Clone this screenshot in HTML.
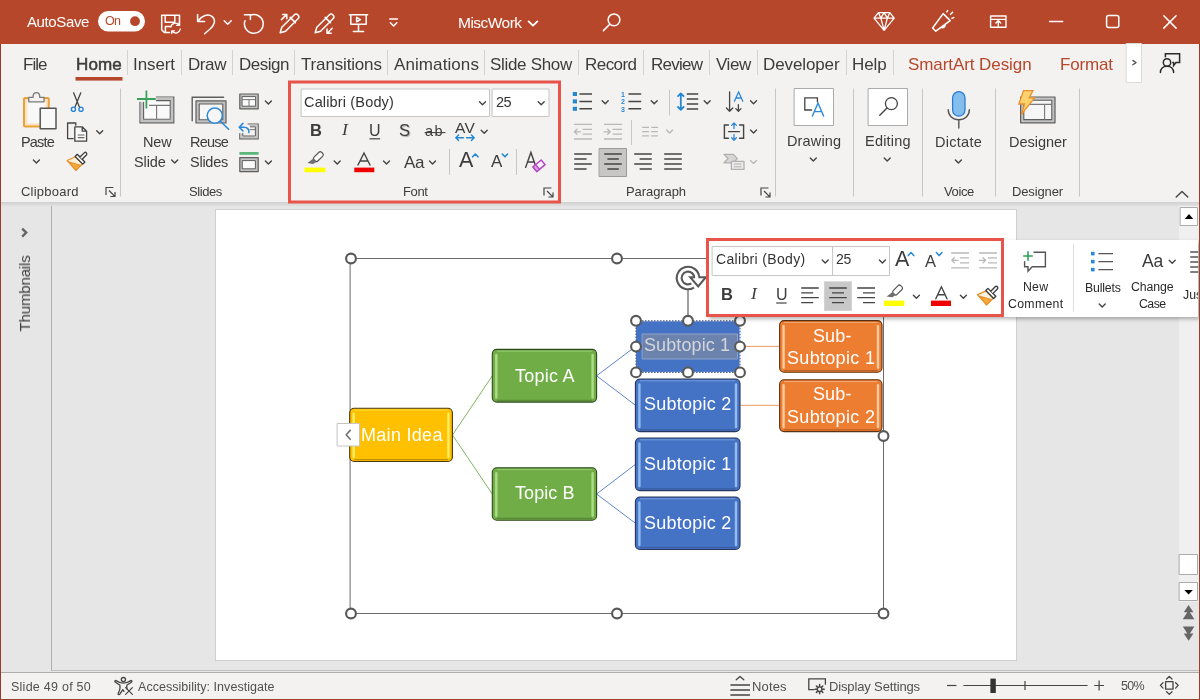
<!DOCTYPE html>
<html lang="en">
<head>
<meta charset="utf-8">
<title>MiscWork - PowerPoint</title>
<style>
*{box-sizing:border-box;margin:0;padding:0}
html,body{width:1200px;height:700px;overflow:hidden;background:#e6e6e6}
body{position:relative;font-family:"Liberation Sans",sans-serif;color:#444}
.abs{position:absolute}
.t{position:absolute;white-space:nowrap;line-height:1;font-family:"Liberation Sans",sans-serif;will-change:transform}
svg{position:absolute;left:0;top:0;overflow:visible}
#titlebar{left:0;top:0;width:1200px;height:44px;background:#b7472a}
#tabs{left:0;top:44px;width:1200px;height:40px;background:#f3f2f1}
#ribbon{left:0;top:84px;width:1200px;height:118px;background:#f3f2f1}
#ribshadow{left:0;top:202px;width:1200px;height:5px;background:linear-gradient(#cfcfcf,#e6e6e6)}
#work{left:0;top:206px;width:1200px;height:466px;background:#e6e6e6}
#thumbs{left:0;top:206px;width:52px;height:465px;background:transparent;background:#e6e6e6;border-right:1px solid #b0b0b0}
#slide{left:216px;top:210px;width:800px;height:450px;background:#fff;box-shadow:0 0 0 1px #d0d0d0}
#vscroll{left:1179px;top:206px;width:19.500px;height:396px;background:#f0f0f0}
#status{left:0;top:673px;width:1200px;height:27px;background:#f3f2f1}
#paneline{left:52px;top:670px;width:1147px;height:1px;background:#c0c0c0}
#statline{left:0;top:672px;width:1200px;height:1px;background:#adadad}
#bl{left:0;top:44px;width:1.300px;height:656px;background:#9c3a22}
#br{left:1198.500px;top:44px;width:1.500px;height:656px;background:#a23c23}
#bb{left:0;top:698.500px;width:1200px;height:1.500px;background:#a23c23}
#mini{left:707px;top:240px;width:491px;height:77px;background:#fff;box-shadow:2px 2px 4px rgba(0,0,0,.3)}
.box{position:absolute;background:#fff;border:1px solid #c6c6c6}
.sel{position:absolute;background:#c8c8c8}
</style>
</head>
<body>
<div class="abs" id="titlebar"></div>
<div class="abs" id="tabs"></div>
<div class="abs" id="ribbon"></div>
<div class="abs" id="work"></div>
<div class="abs" id="ribshadow"></div>
<div class="abs" id="thumbs"></div>
<div class="abs" id="vscroll"></div>
<div class="abs" id="slide"></div>
<div class="abs" id="status"></div>
<div class="abs" id="paneline"></div>
<div class="abs" id="statline"></div>
<svg width="1200" height="84" viewBox="0 0 1200 84" fill="none" stroke="#fff" stroke-width="1.5" stroke-linecap="round" stroke-linejoin="round">
<!-- autosave toggle -->
<rect x="98" y="11" width="47" height="20.5" rx="10.2" fill="#fff" stroke="none"/>
<circle cx="135" cy="21.2" r="4.9" fill="#b7472a" stroke="none"/>
<!-- save w/ sync -->
<path d="M161.7 15.2h17.8v10M161.7 15.2v14.6l2.6 2.8h5.2M165.2 15.4v6.8h9.6v-6.8M165.4 32.4v-5.8h4.6"/>
<path d="M170.8 27.2a4.6 4.6 0 0 1 8.2-2.2M179.3 22.6v2.8h-2.8M180.2 29a4.6 4.6 0 0 1-8.2 2.2M171.700 33.600v-2.800h2.800" stroke-width="1.3"/>
<!-- undo -->
<path d="M197.600 14.400v7h7M197.800 21.200c4-5.600 10.400-8 14.400-4.600c4.400 3.800 1.800 9-2.400 12.600l-5.200 4.600"/>
<path d="M224.200 20.800l3.500 3.400l3.500-3.400" stroke-width="1.5"/>
<!-- redo -->
<path d="M250.300 15.200a9.400 9.400 0 1 1-5.300 5.500M244.400 14.800h6v4.600"/>
<!-- pen 1 -->
<path d="M280.200 32.800l1.600-5.600l12.400-12.200a2.600 2.600 0 0 1 3.800 3.800l-12.400 12.400zM290.200 17.400l5.200 5.200M281.400 19.600l5.200-5M282.600 14.600h4.200v4.200"/>
<!-- pen 2 -->
<path d="M315.200 32.800l1.600-5.600l12.400-12.200a2.600 2.600 0 0 1 3.800 3.800l-12.400 12.400zM325.200 17.400l5.200 5.200M332.200 28.200l-5 5M327 29v4.200h4.200"/>
<!-- present -->
<path d="M349.400 14.800h18.200M350.800 15v9.200h15.400v-9.200M358.500 24.400v6.800M353.400 31.400h10.200M356.600 17.400v4.400l3.800-2.200z"/>
<!-- qat -->
<path d="M389.800 19h7.600M390.400 22.800l3.200 3.200l3.200-3.200"/>
<!-- filename chevron -->
<path d="M528.600 21.400l4.400 4.200l4.400-4.200" stroke-width="1.9"/>
<!-- search -->
<circle cx="614" cy="19.800" r="5.900"/><path d="M609.800 24.200l-6.400 6.400"/>
<!-- diamond -->
<path d="M878.400 12.600h11.400l4.400 5.600l-10.100 12.200l-10.100-12.200zM874.200 18.200h20M878.400 12.600l2.400 5.600l3.300 12M889.800 12.600l-2.400 5.600l-3.300 12M880.800 18.200l3.300-5.600l3.300 5.600" stroke-width="1.3"/>
<!-- megaphone -->
<path d="M932.600 28l10.600-14.400l7 7l-14.400 10.600zM941 27.200a2.600 2.600 0 0 0 4-3M946.800 11.800l.8-1.200M950.600 14.200l2-2M952 18.200l1.800-.6" stroke-width="1.500"/>
<!-- ribbon display -->
<path d="M990.600 16h15.400v11.200h-15.400zM990.600 19.400h15.400M998.300 26v-5M995.900 23l2.400-2.400l2.400 2.400" stroke-width="1.4"/>
<!-- window controls -->
<path d="M1049.600 21.400h13"/>
<rect x="1106.600" y="15.600" width="12.200" height="12" rx="2"/>
<path d="M1163.800 15.800l12.300 12.300M1176.100 15.800l-12.300 12.300"/>
</svg>

<svg width="1200" height="700" viewBox="0 0 1200 700" fill="none" stroke-linecap="round" stroke-linejoin="round">
<!-- tab separators -->
<path d="M127.500 50v25M181.500 50v25M232.500 50v25M294.500 50v25M387.500 50v25M484.500 50v25M578.500 50v25M643.500 50v25M709.500 50v25M757.500 50v25M846.500 50v25M893.500 50v25" stroke="#d4d2d0" stroke-width="1" stroke-linecap="butt"/>
<rect x="75.500" y="77" width="47" height="3.600" fill="#b7472a"/>
<!-- scroll right button -->
<rect x="1126.500" y="43.500" width="15" height="39" fill="#fff" stroke="#dddbd9" stroke-width="1"/>
<path d="M1132.800 60.400l3.200 2.200l-3.200 2.200" stroke="#555" stroke-width="1.300"/>
<!-- comments icon -->
<g stroke="#2b2b2b" stroke-width="1.500">
<circle cx="1167" cy="62.500" r="3.700"/>
<path d="M1160.400 72.600c0-4.200 3-6.400 6.600-6.400s6.600 2.200 6.600 6.400"/>
<path d="M1165.400 56.800v-3h14.200v8.800h-3.600l-2.400 3v-3h-.8" stroke-linejoin="miter"/>
</g>
</svg>

<svg width="1200" height="700" viewBox="0 0 1200 700" fill="none" stroke-linecap="round" stroke-linejoin="round">
<defs>
<path id="chev" d="M-3 -1.500l3 3l3-3" fill="none" stroke-width="1.400"/>
<path id="launch" d="M0 7.400v-7.400h7.400M3 3l5.800 5.800M9 4.400v4.600h-4.600" fill="none" stroke="#444" stroke-width="1.200" stroke-linecap="butt" stroke-linejoin="miter"/>
<g id="brush" stroke-linejoin="round">
<path d="M-5 1.500L-8.200 10L4.950 10.750L5 1.500z" fill="#fdf1dc" stroke="#e8912d" stroke-width="1.300"/>
<path d="M-5.660 9.600L4.670 3.800L4.950 10.750z" fill="#f5a83c" stroke="#e8912d" stroke-width="1"/>
<rect x="-5.400" y="-1.500" width="10.800" height="3" fill="#fafafa" stroke="#3b3b3b" stroke-width="1.300"/>
<path d="M-1.500 -1.500v-6a1.500 1.500 0 0 1 3 0v6" fill="#fafafa" stroke="#3b3b3b" stroke-width="1.300"/>
</g>
</defs>
<!-- group separators -->
<path d="M120.500 88.500v108M775.500 88.500v108M853.500 88.500v108M922.500 88.500v108M995.500 88.500v108M1079.500 88.500v108" stroke="#c8c6c4" stroke-width="1" stroke-linecap="butt"/>
<path d="M669.500 89.500v26M631.500 120v25M449.500 149v26M516.500 149v26" stroke="#c8c6c4" stroke-width="1" stroke-linecap="butt"/>

<!-- ===== Clipboard ===== -->
<!-- paste -->
<rect x="24" y="98" width="24.800" height="28.600" rx="1" fill="#fbe3bd" stroke="#e9a23b" stroke-width="2"/>
<rect x="27.400" y="101.400" width="18" height="22" fill="#f8f8f8" stroke="none"/>
<path d="M28.800 101.800v-4.400h4.200c0-2.800 1.400-4.800 3.400-4.800s3.400 2 3.400 4.800h4.200v4.400z" fill="#f3f2f1" stroke="#7a7a7a" stroke-width="1.300"/>
<rect x="40.200" y="108.200" width="15.800" height="20.600" fill="#f8f8f8" stroke="#555" stroke-width="1.500"/>
<use href="#chev" x="36.400" y="161.600" stroke="#444"/>
<!-- cut -->
<g stroke="#444" stroke-width="1.300"><path d="M73.600 92.800l5.800 14.200M80.800 92.800l-5.800 14.200"/></g>
<g stroke="#2b88d8" stroke-width="1.400" fill="#f3f2f1"><circle cx="73.400" cy="109.300" r="2.100"/><circle cx="81" cy="109.300" r="2.100"/></g>
<!-- copy -->
<g stroke="#444" stroke-width="1.300">
<path d="M73.200 138.600h-5.600v-15.600h8.200v2.200"/>
<path d="M74.800 126.800h7.400l4.400 4.400v10h-11.800zM82.200 126.800v4.400h4.400" fill="#f8f8f8"/>
<path d="M78.200 135h5.800M78.200 137.600h5.800" stroke="#666" stroke-width="1.100"/>
</g>
<use href="#chev" x="99.700" y="132.300" stroke="#444"/>
<!-- format painter -->
<use href="#brush" transform="translate(80 159.200) rotate(45)"/>
<use href="#launch" x="106" y="187.500"/>

<!-- ===== Slides ===== -->
<!-- new slide -->
<path d="M156.400 97h17.400v25.800h-33.800v-20.600" stroke="#5e5e5e" stroke-width="1.200" stroke-linejoin="miter"/>
<path d="M156.400 98.800h15.600v22.200h-30.200v-18.800" stroke="#c2c2c2" stroke-width="2.200" stroke-linejoin="miter" stroke-linecap="butt"/>
<path d="M156.400 100.600h13.800v18.600h-26.600v-17" fill="#fafafa" stroke="#5e5e5e" stroke-width="1.100" stroke-linejoin="miter"/>
<path d="M149 105.400h21M156.600 105.400v13.600" stroke="#777" stroke-width="1.100" stroke-linecap="butt"/>
<path d="M137 99h18.800M146.400 90.400v18.200" stroke="#3aa35b" stroke-width="1.800" stroke-linecap="butt"/>
<use href="#chev" x="174.700" y="161.600" stroke="#444"/>
<!-- reuse slides -->
<path d="M192.200 120.800v-23.600h31.400" stroke="#5e5e5e" stroke-width="1.400" stroke-linejoin="miter"/>
<rect x="196" y="100.800" width="30" height="22.200" fill="#c2c2c2" stroke="#5e5e5e" stroke-width="1.200"/>
<rect x="199.200" y="104" width="23.600" height="15.800" fill="#f6f6f6" stroke="#5e5e5e" stroke-width="1.100"/>
<circle cx="214.800" cy="115.600" r="7.600" fill="#f6f6f6" stroke="#2b88d8" stroke-width="1.500"/>
<path d="M220.400 121.200l8.200 8" stroke="#2b88d8" stroke-width="1.600"/>
<!-- layout -->
<rect x="239.800" y="94" width="18.400" height="14.800" fill="#c2c2c2" stroke="#5e5e5e" stroke-width="1.200"/>
<rect x="242.400" y="96.600" width="13.200" height="9.600" fill="#fafafa" stroke="#5e5e5e" stroke-width="1"/>
<path d="M242.400 99.600h13.200M249 99.600v6.600" stroke="#777" stroke-width="1"/>
<use href="#chev" x="268.400" y="102.600" stroke="#444"/>
<!-- reset -->
<path d="M248 124h10.200v14.800h-18.400v-5.200" fill="none" stroke="#5e5e5e" stroke-width="1.200" stroke-linejoin="miter"/>
<path d="M249.600 125.400h7.200v12h-15.600v-4" stroke="#c2c2c2" stroke-width="1.800" stroke-linejoin="miter" stroke-linecap="butt"/>
<path d="M250.400 126.800h5v9.200h-12.600v-2.600" fill="none" stroke="#5e5e5e" stroke-width="1" stroke-linejoin="miter"/>
<path d="M250 129.600h5" stroke="#777" stroke-width="1"/>
<path d="M239.600 127.200h4.400c3.400 0 5 2.200 5 5.400M243 123.400l-3.800 3.800l3.800 3.800" stroke="#2b88d8" stroke-width="1.600"/>
<!-- section -->
<rect x="239.400" y="152" width="19.200" height="2.800" fill="#5cb87a"/>
<rect x="239.800" y="157.600" width="18.400" height="14" fill="#c2c2c2" stroke="#5e5e5e" stroke-width="1.200"/>
<rect x="242.600" y="160.600" width="12.800" height="8.200" fill="#fafafa" stroke="#5e5e5e" stroke-width="1"/>
<use href="#chev" x="268.400" y="162.600" stroke="#444"/>

<!-- ===== Font ===== -->
<rect x="301.500" y="89" width="188" height="27.500" fill="#fff" stroke="#c6c6c6"/>
<rect x="492.500" y="89" width="56.500" height="27.500" fill="#fff" stroke="#c6c6c6"/>
<use href="#chev" x="482.500" y="103.200" stroke="#444"/>
<use href="#chev" x="541.200" y="103.200" stroke="#444"/>
<!-- U underline / ab strike -->
<path d="M369.500 138.800h10.600" stroke="#444" stroke-width="1.200" stroke-linecap="butt"/>
<path d="M424.600 132.600h20.800" stroke="#444" stroke-width="1.100" stroke-linecap="butt"/>
<!-- AV arrow -->
<path d="M455.800 137.800h7.600M466.600 137.800h7.600M458.600 135l-2.800 2.800l2.800 2.800M471.400 135l2.800 2.800l-2.800 2.800" stroke="#2488d0" stroke-width="1.400"/>
<use href="#chev" x="484.200" y="131.800" stroke="#444"/>
<!-- highlighter -->
<rect x="304.500" y="167.600" width="21" height="4.600" fill="#ffff00"/>
<g transform="translate(317.600 157.400) rotate(45)"><rect x="-2.700" y="-6.400" width="5.400" height="10.600" rx="1.800" fill="#fafafa" stroke="#555" stroke-width="1.200"/><path d="M-2.200 4.200h4.400l-.8 3.600l-4.600 3.400z" fill="#6e6e6e"/></g>
<use href="#chev" x="337.200" y="162.600" stroke="#444"/>
<!-- font color -->
<rect x="354.300" y="167.600" width="20" height="4.600" fill="#ee0000"/>
<path d="M358 165l6-12l6 12M360 161h8" stroke="#444" stroke-width="1.400" stroke-linejoin="miter"/>
<use href="#chev" x="386.500" y="162.600" stroke="#444"/>
<use href="#chev" x="432.500" y="162.600" stroke="#444"/>
<!-- grow/shrink -->
<path d="M472.600 156.800l2.700-2.800l2.700 2.800" stroke="#2488d0" stroke-width="1.600"/>
<path d="M502.200 154l2.700 2.800l2.700-2.800" stroke="#2488d0" stroke-width="1.600"/>
<!-- clear formatting -->
<path d="M525.600 167.400l5.300-15l5.300 15M527.600 162h6.600" stroke="#444" stroke-width="1.400" stroke-linejoin="miter"/>
<g transform="translate(539 165.800) rotate(-40)"><rect x="-5.400" y="-3" width="10.800" height="6" fill="#fbf1fc" stroke="#b146c2" stroke-width="1.500"/><rect x="-5.400" y="-3" width="3.600" height="6" fill="#d79be0" stroke="#b146c2" stroke-width="1.200"/></g>
<use href="#launch" x="544" y="188"/>

<!-- ===== Paragraph ===== -->
<!-- bullets -->
<g fill="#2488d0"><rect x="572.800" y="92" width="4.200" height="4"/><rect x="572.800" y="99.400" width="4.200" height="4"/><rect x="572.800" y="106.800" width="4.200" height="4"/></g>
<path d="M579.400 94h12.600M579.400 101.400h12.600M579.400 108.800h12.600" stroke="#444" stroke-width="1.500" stroke-linecap="butt"/>
<use href="#chev" x="605.200" y="102.200" stroke="#444"/>
<!-- numbering lines -->
<path d="M628.400 94h12.800M628.400 101.400h12.800M628.400 108.800h12.800" stroke="#444" stroke-width="1.500" stroke-linecap="butt"/>
<use href="#chev" x="654.200" y="102.200" stroke="#444"/>
<!-- line spacing -->
<path d="M680.800 93.400v16.400M678 96.200l2.800-2.800l2.800 2.800M678 107l2.800 2.800l2.800-2.800" stroke="#2488d0" stroke-width="1.800"/>
<path d="M686.800 94h11.400M686.800 99h11.400M686.800 104h11.400M686.800 109h11.400" stroke="#444" stroke-width="1.500" stroke-linecap="butt"/>
<use href="#chev" x="707.200" y="102.200" stroke="#444"/>
<!-- text direction -->
<path d="M729.600 91.800v19.400M726.400 108l3.200 3.200l3.200-3.200M738.400 104.600v6.600M735.800 108.600l2.600 2.600l2.600-2.600" stroke="#444" stroke-width="1.300"/>
<path d="M734.400 101.200l4.200-9.200l4.200 9.200M735.800 98h5.600" stroke="#2b88d8" stroke-width="1.300" stroke-linejoin="miter"/>
<use href="#chev" x="753.500" y="102.200" stroke="#444"/>
<!-- decrease indent (disabled) -->
<g stroke="#b8b8b8" stroke-width="1.300" stroke-linecap="butt">
<path d="M574 124.400h18M582.600 129.400h9.400M582.600 134.200h9.400M574 139h18"/>
<path d="M574.400 131.800h6.200M577 129.200l-2.600 2.600l2.600 2.600" stroke-linecap="round"/>
<path d="M604 124.400h18M612.600 129.400h9.400M612.600 134.200h9.400M604 139h18"/>
<path d="M604 131.800h6.200M607.600 129.200l2.600 2.600l-2.600 2.600" stroke-linecap="round"/>
<!-- columns -->
<path d="M642.200 127.400h6.800M642.200 131.600h6.800M642.200 135.800h6.800M651.200 127.400h6.800M651.200 131.600h6.800M651.200 135.800h6.800"/>
</g>
<use href="#chev" x="669.600" y="131.400" stroke="#b8b8b8"/>
<!-- align text -->
<path d="M728.400 125h-4v13.200h4M739.600 125h4v13.200h-4" stroke="#444" stroke-width="1.400" stroke-linejoin="miter"/>
<path d="M728.400 131.600h11.200" stroke="#444" stroke-width="1.200"/>
<path d="M734 123.200v5.400M731.600 125.400l2.400-2.400l2.400 2.400M734 134.600v5.400M731.600 137.800l2.400 2.400l2.400-2.400" stroke="#2b88d8" stroke-width="1.300"/>
<use href="#chev" x="753.500" y="131.400" stroke="#444"/>
<!-- align buttons -->
<rect x="599.500" y="148.500" width="27" height="28" fill="#c8c6c4" stroke="#9a9a9a"/>
<g stroke="#444" stroke-width="1.500" stroke-linecap="butt">
<path d="M574.200 154h17.600M574.200 159h12.400M574.200 164h17.600M574.200 169h12.400"/>
<path d="M604.200 154h17.600M607.400 159h11.400M604.200 164h17.600M607.400 169h11.400"/>
<path d="M634.200 154h17.600M639.600 159h12.200M634.200 164h17.600M639.600 169h12.200"/>
<path d="M664.200 154h17.600M664.200 159h17.600M664.200 164h17.600M664.200 169h17.600"/>
</g>
<!-- convert to smartart (disabled) -->
<g stroke="#b0b0b0" stroke-width="1.300">
<path d="M724 154.400h9.400l4 4.200l-4 4.200h-9.400l4-4.200z" fill="#d6d6d6"/>
<rect x="731.400" y="161.400" width="12.600" height="8" fill="#ececec"/>
<path d="M734.200 164h7M734.200 166.800h7" stroke-width="1"/>
</g>
<use href="#chev" x="753.500" y="162" stroke="#b8b8b8"/>
<use href="#launch" x="761" y="188"/>

<!-- ===== Drawing / Editing ===== -->
<rect x="794.500" y="88.500" width="39" height="37" fill="#fff" stroke="#ababab"/>
<path d="M811.600 110h-6.800v-12.200h12.600v4" stroke="#444" stroke-width="1.300" stroke-linejoin="miter"/>
<path d="M812.400 116l5.600-13l5.600 13M814.400 111.600h7.200" stroke="#2b88d8" stroke-width="1.400" stroke-linejoin="miter"/>
<use href="#chev" x="813.300" y="159.600" stroke="#444"/>
<rect x="868.500" y="88.500" width="39" height="37" fill="#fff" stroke="#ababab"/>
<circle cx="891.400" cy="103.600" r="6" stroke="#444" stroke-width="1.300"/>
<path d="M887 108l-7.200 7.200" stroke="#444" stroke-width="1.400"/>
<use href="#chev" x="887.200" y="159.600" stroke="#444"/>
<!-- dictate -->
<rect x="952.600" y="91.600" width="12.400" height="24.600" rx="6.200" fill="#83beec" stroke="#2b7cd3" stroke-width="1.300"/>
<path d="M948.200 109.600c0 6 4.600 10.200 10.600 10.200s10.600-4.200 10.600-10.200M958.800 120v8" stroke="#555" stroke-width="1.400"/>
<use href="#chev" x="958.400" y="161.400" stroke="#444"/>
<!-- designer -->
<rect x="1020.600" y="97" width="34.400" height="25.800" fill="#c2c2c2" stroke="#5e5e5e" stroke-width="1.200"/>
<rect x="1023.800" y="100.200" width="28" height="19.400" fill="#f6f6f6" stroke="#5e5e5e" stroke-width="1.100"/>
<path d="M1024 104.400h27.600M1044.600 104.400v15" stroke="#777" stroke-width="1.100" stroke-linecap="butt"/>
<path d="M1023.600 90.600h9.400l-3.800 7.200h5.400l-13.400 16.800l3.400-10.600h-5.800z" fill="#fcd16e" stroke="#e8912d" stroke-width="1.300" stroke-linejoin="miter"/>
<!-- collapse ribbon -->
<path d="M1176.200 197l5.800-5.400l5.800 5.400" stroke="#444" stroke-width="1.400"/>

<!-- red highlight rect -->
<rect x="289.500" y="82" width="270" height="120" fill="none" stroke="#e8544a" stroke-width="3" stroke-linejoin="miter"/>
</svg>

<svg width="1200" height="700" viewBox="0 0 1200 700" fill="none" stroke-linecap="round" stroke-linejoin="round">
<path d="M22.200 228.600l4 4l-4 4" stroke="#666" stroke-width="2.400" stroke-linecap="butt" stroke-linejoin="miter"/>
<rect x="1180.500" y="207.500" width="17" height="18" fill="#fff" stroke="#ababab"/>
<path d="M1184.800 219l4.200-5l4.200 5z" fill="#000"/>
<rect x="1179.500" y="554.500" width="18" height="20" fill="#fff" stroke="#ababab"/>
<rect x="1179.500" y="582.500" width="18" height="18" fill="#fff" stroke="#ababab"/>
<path d="M1184.400 590l4.200 4.600l4.200-4.600z" fill="#000"/>
<path d="M1188.600 605l4.800 7.200h-9.600zM1188.600 610.200l5.800 9h-11.600z" fill="#666"/>
<path d="M1188.600 640.800l4.800-7.200h-9.600zM1188.600 635.600l5.800-9h-11.600z" fill="#666"/>
<g stroke-width="1" stroke-linecap="butt">
<path d="M452.500 435L492.300 375.800M452.500 435L492.300 494" stroke="#82b55e"/>
<path d="M596.600 375.800L635.500 346.500M596.600 375.800L635.500 405.300M596.600 494L635.500 464.300M596.600 494L635.500 523.300" stroke="#5f86cf"/>
<path d="M740.500 346.400H779.600M740.500 405.300H779.600" stroke="#ee9a62"/>
</g>
<rect x="350.500" y="258.500" width="533" height="355" stroke="#6a6a6a" stroke-width="1"/>
<rect x="349.7" y="408.2" width="102.7" height="53.3" rx="4.500" fill="#ffc000" stroke="#4a3a10" stroke-width="1.100"/>
<path d="M353.7 413.7V457.0M448.4 413.7V457.0" stroke="#fff36b" stroke-width="2.400" stroke-linecap="round" opacity=".9"/>
<path d="M354.7 410.0H447.4" stroke="#fff36b" stroke-width="1" opacity=".55"/>
<path d="M354.7 459.7H447.4" stroke="#4a3a10" stroke-width="1.200" opacity=".35"/>
<rect x="492.3" y="349.4" width="104.3" height="52.7" rx="4.500" fill="#70ad47" stroke="#2e4a1c" stroke-width="1.100"/>
<path d="M496.3 354.9V397.6M592.6 354.9V397.6" stroke="#b5e08e" stroke-width="2.400" stroke-linecap="round" opacity=".9"/>
<path d="M497.3 351.2H591.6" stroke="#b5e08e" stroke-width="1" opacity=".55"/>
<path d="M497.3 400.3H591.6" stroke="#2e4a1c" stroke-width="1.200" opacity=".35"/>
<rect x="492.3" y="467.8" width="104.3" height="52.4" rx="4.500" fill="#70ad47" stroke="#2e4a1c" stroke-width="1.100"/>
<path d="M496.3 473.3V515.7M592.6 473.3V515.7" stroke="#b5e08e" stroke-width="2.400" stroke-linecap="round" opacity=".9"/>
<path d="M497.3 469.6H591.6" stroke="#b5e08e" stroke-width="1" opacity=".55"/>
<path d="M497.3 518.4H591.6" stroke="#2e4a1c" stroke-width="1.200" opacity=".35"/>
<rect x="635.4" y="379.0" width="104.6" height="52.6" rx="4.500" fill="#4472c4" stroke="#26365c" stroke-width="1.100"/>
<path d="M639.4 384.5V427.1M736.0 384.5V427.1" stroke="#9fc4f4" stroke-width="2.400" stroke-linecap="round" opacity=".9"/>
<path d="M640.4 380.8H735.0" stroke="#9fc4f4" stroke-width="1" opacity=".55"/>
<path d="M640.4 429.8H735.0" stroke="#26365c" stroke-width="1.200" opacity=".35"/>
<rect x="635.4" y="438.0" width="104.6" height="52.6" rx="4.500" fill="#4472c4" stroke="#26365c" stroke-width="1.100"/>
<path d="M639.4 443.5V486.1M736.0 443.5V486.1" stroke="#9fc4f4" stroke-width="2.400" stroke-linecap="round" opacity=".9"/>
<path d="M640.4 439.8H735.0" stroke="#9fc4f4" stroke-width="1" opacity=".55"/>
<path d="M640.4 488.8H735.0" stroke="#26365c" stroke-width="1.200" opacity=".35"/>
<rect x="635.4" y="497.0" width="104.6" height="52.5" rx="4.500" fill="#4472c4" stroke="#26365c" stroke-width="1.100"/>
<path d="M639.4 502.5V545.0M736.0 502.5V545.0" stroke="#9fc4f4" stroke-width="2.400" stroke-linecap="round" opacity=".9"/>
<path d="M640.4 498.8H735.0" stroke="#9fc4f4" stroke-width="1" opacity=".55"/>
<path d="M640.4 547.7H735.0" stroke="#26365c" stroke-width="1.200" opacity=".35"/>
<rect x="779.6" y="320.6" width="102.4" height="51.7" rx="4.500" fill="#ed7d31" stroke="#5e3212" stroke-width="1.100"/>
<path d="M783.6 326.1V367.8M878.0 326.1V367.8" stroke="#ffd4ac" stroke-width="2.400" stroke-linecap="round" opacity=".9"/>
<path d="M784.6 322.4H877.0" stroke="#ffd4ac" stroke-width="1" opacity=".55"/>
<path d="M784.6 370.5H877.0" stroke="#5e3212" stroke-width="1.200" opacity=".35"/>
<rect x="779.6" y="379.8" width="102.4" height="51.8" rx="4.500" fill="#ed7d31" stroke="#5e3212" stroke-width="1.100"/>
<path d="M783.6 385.3V427.1M878.0 385.3V427.1" stroke="#ffd4ac" stroke-width="2.400" stroke-linecap="round" opacity=".9"/>
<path d="M784.6 381.6H877.0" stroke="#ffd4ac" stroke-width="1" opacity=".55"/>
<path d="M784.6 429.8H877.0" stroke="#5e3212" stroke-width="1.200" opacity=".35"/>
<rect x="636" y="320.800" width="104" height="51.600" fill="#4472c4"/>
<rect x="636" y="320.800" width="104" height="51.600" stroke="#fff" stroke-width="1" />
<rect x="636" y="320.800" width="104" height="51.600" stroke="#3a4a78" stroke-width="1" stroke-dasharray="1.500 1.500" stroke-linecap="butt"/>
<rect x="642.500" y="334" width="95" height="25" fill="#6b83ad" stroke="#8fa3c6" stroke-width="1"/>
<rect x="337.500" y="423.500" width="22" height="22.500" fill="#fff" stroke="#c4c4c4"/>
<path d="M350.200 430.400l-4 4.400l4 4.400" stroke="#777" stroke-width="1.700"/>
<path d="M688 290V315" stroke="#5f5f5f" stroke-width="1.200"/>
<path d="M696.78 277.39A8.8 8.8 0 1 0 692.66 285.46" stroke="#585858" stroke-width="7" stroke-linecap="butt"/>
<path d="M690.200 277.200h15.600l-7.600 9.200z" fill="#fff" stroke="#585858" stroke-width="2" stroke-linejoin="miter"/>
<path d="M696.79 278.31A8.8 8.8 0 1 0 693.42 284.93" stroke="#fff" stroke-width="2.800" stroke-linecap="butt"/>
<path d="M695.400 275.800h2.800v3.400h-2.800z" fill="#fff"/>
<circle cx="351" cy="258.5" r="4.900" fill="#fff" stroke="#585858" stroke-width="2.100"/>
<circle cx="617" cy="258.5" r="4.900" fill="#fff" stroke="#585858" stroke-width="2.100"/>
<circle cx="883.5" cy="258.5" r="4.900" fill="#fff" stroke="#585858" stroke-width="2.100"/>
<circle cx="883.5" cy="436" r="4.900" fill="#fff" stroke="#585858" stroke-width="2.100"/>
<circle cx="351" cy="613.5" r="4.900" fill="#fff" stroke="#585858" stroke-width="2.100"/>
<circle cx="617" cy="613.5" r="4.900" fill="#fff" stroke="#585858" stroke-width="2.100"/>
<circle cx="883.5" cy="613.5" r="4.900" fill="#fff" stroke="#585858" stroke-width="2.100"/>
<circle cx="636" cy="320.8" r="4.900" fill="#fff" stroke="#585858" stroke-width="2.100"/>
<circle cx="688" cy="320.8" r="4.900" fill="#fff" stroke="#585858" stroke-width="2.100"/>
<circle cx="740" cy="320.8" r="4.900" fill="#fff" stroke="#585858" stroke-width="2.100"/>
<circle cx="636" cy="346.6" r="4.900" fill="#fff" stroke="#585858" stroke-width="2.100"/>
<circle cx="740" cy="346.6" r="4.900" fill="#fff" stroke="#585858" stroke-width="2.100"/>
<circle cx="636" cy="372.4" r="4.900" fill="#fff" stroke="#585858" stroke-width="2.100"/>
<circle cx="688" cy="372.4" r="4.900" fill="#fff" stroke="#585858" stroke-width="2.100"/>
<circle cx="740" cy="372.4" r="4.900" fill="#fff" stroke="#585858" stroke-width="2.100"/>
</svg>

<svg width="1200" height="700" viewBox="0 0 1200 700" fill="none" stroke-linecap="round" stroke-linejoin="round">
<!-- accessibility -->
<g stroke="#444" stroke-width="1.300">
<circle cx="123.400" cy="679.600" r="2.100"/>
<path d="M116 680.600c2.400 1.400 4.600 2.600 7.400 2.600s5-1.200 7.400-2.600c.8-.4 1.600.6.800 1.400c-1.600 1.400-3.400 2.400-4.600 3c-.6 1.600-.2 3.200.2 4.200M119.800 685c-1.200-.6-3-1.600-4.600-3c-.8-.8 0-1.800.8-1.400M119.800 685c.6 2.400-.2 5.800-1.600 8.400c-.4 1 .8 1.800 1.600.8l3-4.600l1.200 1.800"/>
<path d="M125.600 687.600l6.800 6.800M132.400 687.600l-6.800 6.800" stroke-width="1.200"/>
</g>
<!-- notes -->
<g stroke="#444" stroke-width="1.300" stroke-linecap="butt">
<path d="M736.200 679.800l3.800-3.400l3.800 3.400" stroke-linecap="round"/>
<path d="M730.400 685h19.600M730.400 690h19.600M730.400 695h19.600"/>
</g>
<!-- display settings -->
<g stroke="#444" stroke-width="1.300">
<path d="M814 689.600h-5.200v-10.800h16.600v5.400" stroke-linejoin="miter"/>
<circle cx="819.600" cy="689.200" r="2.300"/>
<path d="M819.600 684.600v1.600M819.600 692.200v1.600M815 689.200h1.600M822.600 689.200h1.600M816.400 686l1.100 1.100M821.700 691.300l1.100 1.100M822.800 686l-1.100 1.100M817.500 691.300l-1.100 1.100" stroke-width="1.500"/>
</g>
<!-- zoom slider -->
<g stroke="#444" stroke-width="1.200" stroke-linecap="butt">
<path d="M947 685.500h9.400"/>
<path d="M963.400 685.500h124.200M1025 681v9"/>
<path d="M1094.200 685.500h9.800M1099.100 680.600v9.800"/>
</g>
<rect x="990.400" y="678.600" width="5.400" height="14.400" fill="#333"/>
<!-- fit to window -->
<g stroke="#444" stroke-width="1.300">
<rect x="1165.600" y="681.600" width="7.400" height="7.600"/>
<path d="M1166.600 679l2.700-2.600l2.700 2.600M1166.600 691.800l2.700 2.600l2.700-2.600M1163 682.700l-2.600 2.700l2.600 2.700M1175.600 682.700l2.600 2.700l-2.600 2.700"/>
</g>
</svg>

<span class="t" style="left:27.00px;top:13.80px;font-size:15px;color:#fff;letter-spacing:-0.381px;">AutoSave</span>
<span class="t" style="left:105.40px;top:15.02px;font-size:12.5px;color:#b7472a;letter-spacing:-0.644px;">On</span>
<span class="t" style="left:457.50px;top:15.18px;font-size:15.5px;color:#fff;letter-spacing:-0.531px;">MiscWork</span>
<span class="t" style="left:22.50px;top:55.61px;font-size:17px;color:#3c3c3c;letter-spacing:-0.977px;">File</span>
<span class="t" style="left:75.90px;top:55.61px;font-size:17px;color:#3c3c3c;letter-spacing:0.135px;-webkit-text-stroke:0.55px #3c3c3c;">Home</span>
<span class="t" style="left:133.00px;top:55.61px;font-size:17px;color:#3c3c3c;letter-spacing:-0.089px;">Insert</span>
<span class="t" style="left:188.00px;top:55.61px;font-size:17px;color:#3c3c3c;letter-spacing:-0.418px;">Draw</span>
<span class="t" style="left:239.00px;top:55.61px;font-size:17px;color:#3c3c3c;letter-spacing:-0.487px;">Design</span>
<span class="t" style="left:301.00px;top:55.61px;font-size:17px;color:#3c3c3c;letter-spacing:-0.161px;">Transitions</span>
<span class="t" style="left:393.75px;top:55.61px;font-size:17px;color:#3c3c3c;letter-spacing:0.089px;">Animations</span>
<span class="t" style="left:490.00px;top:55.61px;font-size:17px;color:#3c3c3c;letter-spacing:-0.306px;">Slide Show</span>
<span class="t" style="left:584.50px;top:55.61px;font-size:17px;color:#3c3c3c;letter-spacing:-0.552px;">Record</span>
<span class="t" style="left:650.50px;top:55.61px;font-size:17px;color:#3c3c3c;letter-spacing:-0.750px;">Review</span>
<span class="t" style="left:716.00px;top:55.61px;font-size:17px;color:#3c3c3c;letter-spacing:-0.449px;">View</span>
<span class="t" style="left:763.00px;top:55.61px;font-size:17px;color:#3c3c3c;letter-spacing:-0.111px;">Developer</span>
<span class="t" style="left:852.00px;top:55.61px;font-size:17px;color:#3c3c3c;letter-spacing:-0.117px;">Help</span>
<span class="t" style="left:907.50px;top:55.61px;font-size:17px;color:#b7472a;letter-spacing:-0.080px;">SmartArt Design</span>
<span class="t" style="left:1059.60px;top:55.61px;font-size:17px;color:#b7472a;letter-spacing:-0.174px;">Format</span>
<span class="t" style="left:20.60px;top:135.13px;font-size:14.5px;color:#3c3c3c;letter-spacing:-0.839px;">Paste</span>
<span class="t" style="left:142.80px;top:135.13px;font-size:14.5px;color:#3c3c3c;letter-spacing:-0.139px;">New</span>
<span class="t" style="left:133.70px;top:155.23px;font-size:14.5px;color:#3c3c3c;letter-spacing:-0.110px;">Slide</span>
<span class="t" style="left:189.50px;top:135.13px;font-size:14.5px;color:#3c3c3c;letter-spacing:-0.784px;">Reuse</span>
<span class="t" style="left:189.50px;top:155.23px;font-size:14.5px;color:#3c3c3c;letter-spacing:-0.250px;">Slides</span>
<span class="t" style="left:787.00px;top:133.73px;font-size:14.5px;color:#3c3c3c;letter-spacing:0.145px;">Drawing</span>
<span class="t" style="left:864.60px;top:133.73px;font-size:14.5px;color:#3c3c3c;letter-spacing:0.222px;">Editing</span>
<span class="t" style="left:935.40px;top:134.73px;font-size:14.5px;color:#3c3c3c;letter-spacing:0.280px;">Dictate</span>
<span class="t" style="left:1008.60px;top:134.73px;font-size:14.5px;color:#3c3c3c;letter-spacing:-0.016px;">Designer</span>
<span class="t" style="left:21.00px;top:185.40px;font-size:13px;color:#3c3c3c;letter-spacing:0.227px;">Clipboard</span>
<span class="t" style="left:188.60px;top:185.40px;font-size:13px;color:#3c3c3c;letter-spacing:-0.420px;">Slides</span>
<span class="t" style="left:402.50px;top:185.40px;font-size:13px;color:#3c3c3c;letter-spacing:-0.379px;">Font</span>
<span class="t" style="left:626.20px;top:185.40px;font-size:13px;color:#3c3c3c;letter-spacing:-0.080px;">Paragraph</span>
<span class="t" style="left:943.50px;top:185.40px;font-size:13px;color:#3c3c3c;letter-spacing:-0.362px;">Voice</span>
<span class="t" style="left:1011.60px;top:185.40px;font-size:13px;color:#3c3c3c;letter-spacing:-0.129px;">Designer</span>
<span class="t" style="left:304.20px;top:95.23px;font-size:14.5px;color:#333;letter-spacing:0.154px;">Calibri (Body)</span>
<span class="t" style="left:495.50px;top:95.23px;font-size:14.5px;color:#333;letter-spacing:-0.570px;">25</span>
<span class="t" style="left:309.60px;top:122.23px;font-size:16.5px;color:#3c3c3c;font-weight:bold;">B</span>
<span class="t" style="left:342.40px;top:121.39px;font-size:17.5px;color:#3c3c3c;font-style:italic;font-family:'Liberation Serif',serif;">I</span>
<span class="t" style="left:368.80px;top:122.66px;font-size:16px;color:#3c3c3c;">U</span>
<span class="t" style="left:399.00px;top:122.43px;font-size:16.5px;color:#3c3c3c;text-shadow:1px 1px 1px #aaa;">S</span>
<span class="t" style="left:425.40px;top:124.13px;font-size:14.5px;color:#3c3c3c;letter-spacing:1.530px;">ab</span>
<span class="t" style="left:455.00px;top:120.48px;font-size:15.5px;color:#3c3c3c;letter-spacing:0.234px;">AV</span>
<span class="t" style="left:403.70px;top:153.61px;font-size:17px;color:#3c3c3c;letter-spacing:-0.398px;">Aa</span>
<span class="t" style="left:459.00px;top:149.60px;font-size:21.5px;color:#3c3c3c;">A</span>
<span class="t" style="left:490.80px;top:153.41px;font-size:17px;color:#3c3c3c;">A</span>
<span class="t" style="left:621.40px;top:90.67px;font-size:7px;color:#2b88d8;letter-spacing:0.694px;font-weight:bold;">1</span>
<span class="t" style="left:621.40px;top:98.27px;font-size:7px;color:#2b88d8;letter-spacing:0.694px;font-weight:bold;">2</span>
<span class="t" style="left:621.40px;top:105.67px;font-size:7px;color:#2b88d8;letter-spacing:0.694px;font-weight:bold;">3</span>
<span class="t" style="left:360.80px;top:425.76px;font-size:18px;color:#fff;letter-spacing:0.293px;">Main Idea</span>
<span class="t" style="left:514.50px;top:367.16px;font-size:18px;color:#fff;letter-spacing:0.250px;">Topic A</span>
<span class="t" style="left:514.50px;top:484.16px;font-size:18px;color:#fff;letter-spacing:0.067px;">Topic B</span>
<span class="t" style="left:644.40px;top:335.96px;font-size:18px;color:#d4d6da;letter-spacing:0.114px;">Subtopic 1</span>
<span class="t" style="left:643.60px;top:395.36px;font-size:18px;color:#fff;letter-spacing:0.254px;">Subtopic 2</span>
<span class="t" style="left:643.60px;top:454.56px;font-size:18px;color:#fff;letter-spacing:0.254px;">Subtopic 1</span>
<span class="t" style="left:643.60px;top:514.16px;font-size:18px;color:#fff;letter-spacing:0.254px;">Subtopic 2</span>
<span class="t" style="left:812.50px;top:326.56px;font-size:18px;color:#fff;letter-spacing:0.117px;">Sub-</span>
<span class="t" style="left:786.80px;top:348.76px;font-size:18px;color:#fff;letter-spacing:0.314px;">Subtopic 1</span>
<span class="t" style="left:812.50px;top:385.36px;font-size:18px;color:#fff;letter-spacing:0.117px;">Sub-</span>
<span class="t" style="left:786.80px;top:407.66px;font-size:18px;color:#fff;letter-spacing:0.314px;">Subtopic 2</span>
<span class="t" style="font-size:15px;color:#3c3c3c;left:0;top:0;letter-spacing:-0.15px;transform-origin:0 0;transform:translate(17px,331.500px) rotate(-90deg);">Thumbnails</span>
<span class="t" style="left:11.00px;top:680.92px;font-size:12.5px;color:#505050;letter-spacing:0.253px;">Slide 49 of 50</span>
<span class="t" style="left:137.50px;top:680.92px;font-size:12.5px;color:#505050;letter-spacing:0.039px;">Accessibility: Investigate</span>
<span class="t" style="left:752.00px;top:680.00px;font-size:13px;color:#505050;letter-spacing:0.146px;">Notes</span>
<span class="t" style="left:829.00px;top:680.00px;font-size:13px;color:#505050;letter-spacing:-0.139px;">Display Settings</span>
<span class="t" style="left:1120.70px;top:680.02px;font-size:12.5px;color:#505050;letter-spacing:-0.710px;">50%</span>
<div class="abs" id="mini"></div>
<svg width="1200" height="700" viewBox="0 0 1200 700" fill="none" stroke-linecap="round" stroke-linejoin="round">
<defs>
<path id="chev2" d="M-3 -1.500l3 3l3-3" fill="none" stroke-width="1.400"/>
</defs>
<!-- combo boxes -->
<rect x="712.500" y="246.500" width="120.500" height="29" fill="#fff" stroke="#c6c6c6"/>
<rect x="833" y="246.500" width="56.500" height="29" fill="#fff" stroke="#c6c6c6"/>
<use href="#chev2" x="825.200" y="261.600" stroke="#444"/>
<use href="#chev2" x="882.400" y="261.600" stroke="#444"/>
<!-- grow / shrink carets -->
<path d="M908.200 255.600l2.800-3l2.800 3" stroke="#2b88d8" stroke-width="1.500"/>
<path d="M936.400 252.600l2.800 3l2.800-3" stroke="#2b88d8" stroke-width="1.500"/>
<!-- indent (disabled) -->
<g stroke="#b8b8b8" stroke-width="1.300" stroke-linecap="butt">
<path d="M951.200 253h17.800M960 257.800h9M960 262.800h9M951.200 267.800h17.800"/>
<path d="M951.800 260.300h6.200M954.400 257.700l-2.600 2.600l2.600 2.600" stroke-linecap="round"/>
<path d="M979.200 253h17.800M988 257.800h9M988 262.800h9M979.200 267.800h17.800"/>
<path d="M979.400 260.300h6.200M983 257.700l2.600 2.600l-2.600 2.600" stroke-linecap="round"/>
</g>
<!-- U underline -->
<path d="M776.200 303h10.400" stroke="#444" stroke-width="1.200" stroke-linecap="butt"/>
<!-- align buttons -->
<rect x="824.200" y="281.400" width="27.600" height="29.400" fill="#c8c8c8"/>
<g stroke="#444" stroke-width="1.300" stroke-linecap="butt">
<path d="M801.200 288h17.600M801.200 292.800h12M801.200 297.600h17.600M801.200 302.600h12"/>
<path d="M829.200 288h17.600M832 292.800h12M829.200 297.600h17.600M832 302.600h12"/>
<path d="M857.200 288h17.800M863 292.800h12M857.200 297.600h17.800M863 302.600h12"/>
</g>
<!-- highlighter -->
<rect x="884" y="300.600" width="20.400" height="5.400" fill="#ffff00"/>
<g transform="translate(896.800 290.800) rotate(45)"><rect x="-2.700" y="-6.400" width="5.400" height="10.600" rx="1.800" fill="#fff" stroke="#555" stroke-width="1.200"/><path d="M-2.200 4.200h4.400l-.8 3.600l-4.600 3.400z" fill="#6e6e6e"/></g>
<use href="#chev2" x="916.400" y="296.800" stroke="#444"/>
<!-- font color -->
<rect x="931" y="300.600" width="20" height="5.400" fill="#ee0000"/>
<path d="M935.800 298.800l5.600-12l5.600 12M937.600 294.800h7.600" stroke="#444" stroke-width="1.400" stroke-linejoin="miter"/>
<use href="#chev2" x="963.400" y="296.800" stroke="#444"/>
<!-- format painter -->
<use href="#brush" transform="translate(990.800 293.400) rotate(45) scale(1.030)"/>
<!-- new comment -->
<path d="M1034 252.200h11.400v14.600h-13.200l-4.200 4.400v-4.400h-3.400v-5.200" stroke="#555" stroke-width="1.400" stroke-linejoin="miter"/>
<path d="M1023.200 256h9.600M1028 251.200v9.600" stroke="#2ca05a" stroke-width="1.600" stroke-linecap="butt"/>
<path d="M1073.500 244v67.500" stroke="#dcdcdc" stroke-width="1" stroke-linecap="butt"/>
<!-- bullets -->
<g fill="#2b88d8"><rect x="1091" y="251.800" width="3.600" height="3.600"/><rect x="1091" y="259.800" width="3.600" height="3.600"/><rect x="1091" y="267.800" width="3.600" height="3.600"/></g>
<path d="M1098.400 253.600h14.600M1098.400 261.600h14.600M1098.400 269.600h14.600" stroke="#555" stroke-width="1.300" stroke-linecap="butt"/>
<use href="#chev2" x="1102.200" y="305.400" stroke="#444"/>
<use href="#chev2" x="1172.200" y="261.800" stroke="#444"/>
<!-- justify (clipped) -->
<path d="M1190.200 252h8M1190.200 257h8M1190.200 262h8M1190.200 267h8M1190.200 272h8" stroke="#555" stroke-width="1.300" stroke-linecap="butt"/>
<!-- red highlight rect -->
<rect x="707.500" y="239.500" width="295" height="76" fill="none" stroke="#e8544a" stroke-width="3" stroke-linejoin="miter"/>
</svg>

<span class="t" style="left:715.60px;top:252.05px;font-size:14px;color:#333;letter-spacing:0.342px;">Calibri (Body)</span>
<span class="t" style="left:836.40px;top:252.05px;font-size:14px;color:#333;letter-spacing:-0.339px;">25</span>
<span class="t" style="left:895.00px;top:248.70px;font-size:21.5px;color:#3c3c3c;">A</span>
<span class="t" style="left:925.00px;top:252.93px;font-size:16.5px;color:#3c3c3c;">A</span>
<span class="t" style="left:721.30px;top:286.33px;font-size:16.5px;color:#3c3c3c;font-weight:bold;">B</span>
<span class="t" style="left:751.40px;top:285.49px;font-size:17.5px;color:#3c3c3c;font-style:italic;font-family:'Liberation Serif',serif;">I</span>
<span class="t" style="left:775.60px;top:286.76px;font-size:16px;color:#3c3c3c;">U</span>
<span class="t" style="left:1022.50px;top:280.79px;font-size:12.3px;color:#2a2a2a;letter-spacing:0.230px;">New</span>
<span class="t" style="left:1007.50px;top:297.89px;font-size:12.3px;color:#2a2a2a;letter-spacing:0.312px;">Comment</span>
<span class="t" style="left:1084.50px;top:282.19px;font-size:12.3px;color:#2a2a2a;letter-spacing:-0.160px;">Bullets</span>
<span class="t" style="left:1142.00px;top:252.69px;font-size:17.5px;color:#3c3c3c;letter-spacing:-0.053px;">Aa</span>
<span class="t" style="left:1130.80px;top:280.79px;font-size:12.3px;color:#2a2a2a;letter-spacing:-0.096px;">Change</span>
<span class="t" style="left:1138.70px;top:297.89px;font-size:12.3px;color:#2a2a2a;letter-spacing:-0.530px;">Case</span>
<span class="t" style="left:1183.30px;top:288.59px;font-size:12.3px;color:#2a2a2a;width:14.5px;overflow:hidden;">Jus</span>
<div class="abs" id="bl"></div>
<div class="abs" id="br"></div>
<div class="abs" id="bb"></div>

</body>
</html>
